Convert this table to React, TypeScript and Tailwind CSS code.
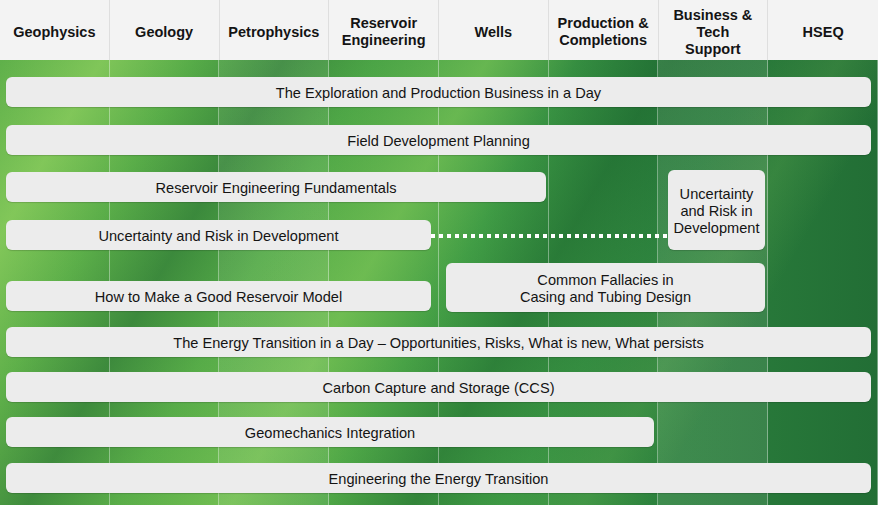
const columns = [
  ["Geophysics"],
  ["Geology"],
  ["Petrophysics"],
  ["Reservoir", "Engineering"],
  ["Wells"],
  ["Production &", "Completions"],
  ["Business &", "Tech", "Support"],
  ["HSEQ"],
];

function Course({ children, className = "" }: { children: React.ReactNode; className?: string }) {
  return (
    <div
      className={`flex items-center justify-center rounded-md bg-[#ececec] pt-[3px] text-center text-[14.6px] leading-[17px] text-[#141414] shadow-[0_1px_1px_rgba(0,0,0,0.15)] ${className}`}
    >
      {children}
    </div>
  );
}

export default function App() {
  return (
    <div className="h-[505px] w-[878px] overflow-hidden font-['Liberation_Sans',Arial,sans-serif]">
      {/* Discipline header */}
      <header className="grid h-[60px] grid-cols-8 bg-[#f3f3f3]">
        {columns.map((lines, i) => (
          <div
            key={i}
            className="flex flex-col items-center justify-center border-r border-[#dedede] pt-[4px] text-center text-[14.5px] font-bold leading-[17px] text-[#141414] last:border-r-0"
          >
            {lines.map((l) => (
              <span key={l}>{l}</span>
            ))}
          </div>
        ))}
      </header>

      {/* Course map */}
      <main
        className="flex h-[445px] flex-col pl-[6px] pr-[7px] pt-[17px] bg-[repeating-linear-gradient(90deg,transparent_0_108.75px,rgba(255,255,255,0.38)_108.75px_109.75px),linear-gradient(90deg,transparent_0_219.5px,rgba(255,255,255,0.07)_219.5px_329.25px,transparent_329.25px_658.5px,rgba(255,255,255,0.09)_658.5px_768.25px,transparent_768.25px),linear-gradient(120deg,transparent_0%,rgba(165,222,105,0.5)_9%,transparent_17%,rgba(25,95,45,0.45)_25%,transparent_33%,rgba(150,215,95,0.45)_43%,transparent_51%,rgba(20,90,40,0.4)_59%,transparent_67%,rgba(120,190,90,0.2)_74%,transparent_80%),linear-gradient(90deg,#5fb04a_0%,#52a947_35%,#409c45_55%,#2c813d_75%,#226e35_100%)]"
      >
        <Course className="h-[30px]">The Exploration and Production Business in a Day</Course>
        <Course className="mt-[18px] h-[30px]">Field Development Planning</Course>

        <div className="mt-[15px] grid grid-cols-[425px_15px_100px_122px_97px] grid-rows-[2px_30px_18px_30px_13px_18px_30px_1px]">
          <Course className="col-start-1 col-end-4 row-start-2 row-end-3">Reservoir Engineering Fundamentals</Course>
          <Course className="col-start-5 col-end-6 row-start-1 row-end-5 rounded-[10px]">
            Uncertainty
            <br />
            and Risk in
            <br />
            Development
          </Course>
          <Course className="col-start-1 col-end-2 row-start-4 row-end-5">Uncertainty and Risk in Development</Course>
          <div className="col-start-2 col-end-5 row-start-4 row-end-5 mt-[14px] h-[4px] bg-[repeating-linear-gradient(90deg,#ffffff_0_4px,transparent_4px_8px)]" />
          <Course className="col-start-3 col-end-6 row-start-6 row-end-9 rounded-lg">
            Common Fallacies in
            <br />
            Casing and Tubing Design
          </Course>
          <Course className="col-start-1 col-end-2 row-start-7 row-end-8">How to Make a Good Reservoir Model</Course>
        </div>

        <Course className="mt-[15px] h-[30px]">
          The Energy Transition in a Day – Opportunities, Risks, What is new, What persists
        </Course>
        <Course className="mt-[15px] h-[30px]">Carbon Capture and Storage (CCS)</Course>
        <Course className="mt-[15px] h-[30px] w-[648px]">Geomechanics Integration</Course>
        <Course className="mt-[16px] h-[30px]">Engineering the Energy Transition</Course>
      </main>
    </div>
  );
}
